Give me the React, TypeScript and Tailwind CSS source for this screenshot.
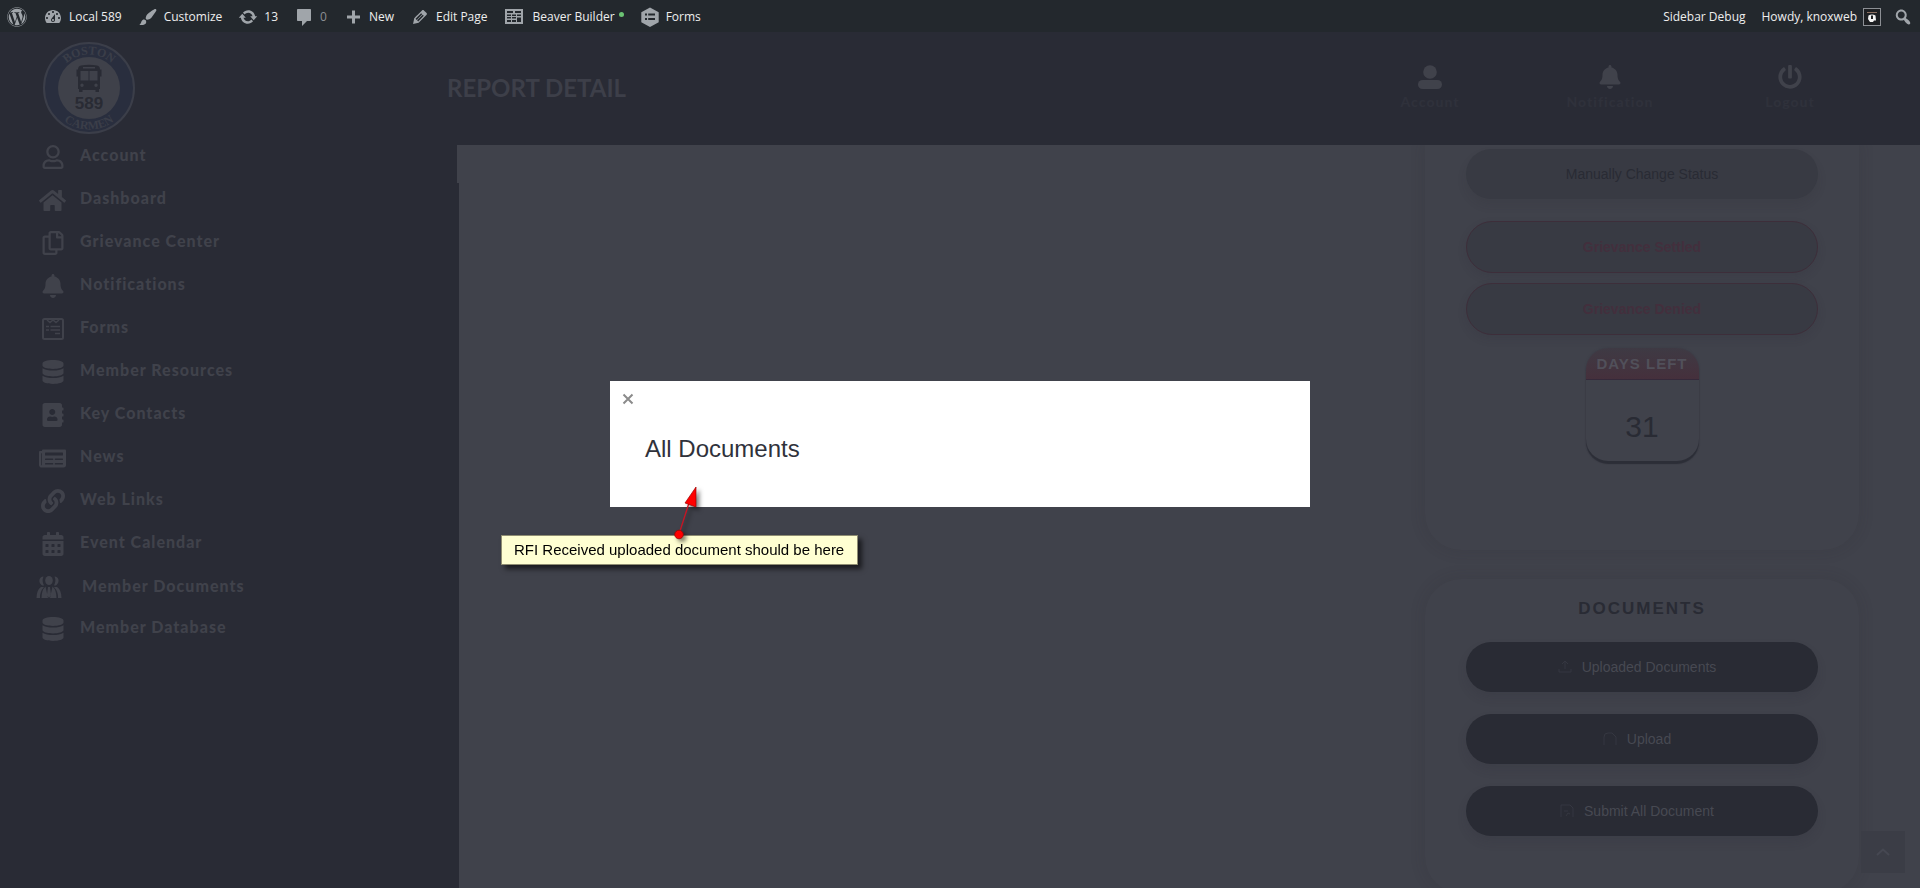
import type { ReactNode } from "react";
import {
  FaAddressBook,
  FaBell,
  FaCalendarAlt,
  FaDatabase,
  FaHome,
  FaLink,
  FaNewspaper,
  FaPowerOff,
  FaRegCopy,
  FaRegUser,
  FaWordpress,
} from "react-icons/fa";

const DASH = {
  dashboard:
    "M3.76 16h12.48c1.1-1.37 1.76-3.11 1.76-5 0-4.42-3.58-8-8-8s-8 3.58-8 8c0 1.89.66 3.63 1.76 5zM10 4c.55 0 1 .45 1 1s-.45 1-1 1-1-.45-1-1 .45-1 1-1zM6 6c.55 0 1 .45 1 1s-.45 1-1 1-1-.45-1-1 .45-1 1-1zm8 0c.55 0 1 .45 1 1s-.45 1-1 1-1-.45-1-1 .45-1 1-1zm-5.37 5.55L12 7v6c0 1.1-.9 2-2 2s-2-.9-2-2c0-.57.24-1.08.63-1.45zM4 10c.55 0 1 .45 1 1s-.45 1-1 1-1-.45-1-1 .45-1 1-1zm12 0c.55 0 1 .45 1 1s-.45 1-1 1-1-.45-1-1 .45-1 1-1zm-5 3c0-.55-.45-1-1-1s-1 .45-1 1 .45 1 1 1 1-.45 1-1z",
  brush:
    "M18.33 3.57s.27-.8-.31-1.36c-.53-.52-1.22-.24-1.22-.24-.61.3-5.76 3.47-7.67 5.57-.86.96-2.06 3.79-1.09 4.82.92.98 3.96-.17 4.79-1 2.06-2.06 5.21-7.17 5.5-7.79zM1.4 17.65c2.37-1.56 1.46-3.41 3.23-4.64.93-.65 2.22-.62 3.08.29.63.67.8 2.57-.16 3.46-1.57 1.45-4 1.55-6.15.89z",
  update:
    "M10.2 3.28c3.53 0 6.43 2.61 6.92 6h2.08l-3.5 4-3.5-4h2.32c-.45-1.97-2.21-3.45-4.32-3.45-1.45 0-2.73.71-3.54 1.78L4.95 5.66C6.23 4.2 8.11 3.28 10.2 3.28zm-.4 13.44c-3.52 0-6.43-2.61-6.92-6H.8l3.5-4c1.17 1.33 2.33 2.67 3.5 4H5.48c.45 1.97 2.21 3.45 4.32 3.45 1.45 0 2.73-.71 3.54-1.78l1.71 1.95c-1.28 1.46-3.15 2.38-5.25 2.38z",
  comment:
    "M4 2h12c.6 0 1 .4 1 1v10c0 .6-.4 1-1 1h-3l-5 5v-5H4c-.6 0-1-.4-1-1V3c0-.6.4-1 1-1z",
  plus: "M17 8.500v3h-5v5H9v-5H4v-3h5v-5h3v5z",
  edit: "M13.89 3.39l2.71 2.72c.46.46.42 1.24.03 1.64l-8.01 8.02-5.56 1.16 1.16-5.58s7.6-7.63 7.99-8.03c.39-.39 1.22-.39 1.68.07zm-2.73 2.79l-5.59 5.61 1.11 1.11 5.54-5.65zm-2.97 8.23l5.58-5.6-1.07-1.08-5.59 5.6z",
  table: "M1 2h18v15H1zM3 4v2h6V4zm8 0v2h6V4zM3 7.500v1.500h4V7.500zm5 0v1.500h4V7.500zm5 0v1.500h4V7.500zM3 10v1.500h4V10zm5 0v1.500h4V10zM3 13v2h4v-2zm5 0v2h4v-2zm5-2.500v4.500h4v-4.500z",
  forms:
    "M10 .5l8.700 4.800v9.900L10 20l-8.700-4.800V5.300zM5 6.500v2h2v-2zm3.200 0v2H15v-2zM5 11v2h2v-2zm3.200 0v2H15v-2z",
  search:
    "M12.140 4.180c1.870 1.870 2.110 4.750.72 6.890.12.1.22.21.36.31.2.16.47.36.81.59.34.24.56.39.66.47.42.31.73.57.94.78.32.32.6.65.84 1 .25.35.44.69.59 1.040.14.35.21.68.18 1-.02.32-.14.59-.36.81s-.49.34-.81.36c-.31.02-.65-.04-.99-.19-.35-.14-.7-.34-1.040-.59-.35-.24-.68-.52-1-.84-.21-.21-.47-.52-.77-.93-.1-.13-.25-.35-.47-.66-.22-.32-.4-.57-.56-.78-.16-.2-.29-.35-.44-.5-2.070 1.090-4.690.76-6.440-.98-2.140-2.150-2.140-5.640 0-7.780 2.150-2.150 5.630-2.150 7.780 0zm-1.410 6.360c1.360-1.370 1.360-3.580 0-4.950-1.370-1.370-3.590-1.370-4.950 0-1.370 1.370-1.370 3.580 0 4.950 1.360 1.370 3.580 1.370 4.950 0z",
};

function Dash({ d }: { d: string }) {
  return (
    <svg viewBox="0 0 20 20" className="size-5 shrink-0 fill-[#a0a5aa]" fillRule="evenodd" aria-hidden="true">
      <path d={d} />
    </svg>
  );
}

function BarLink({ d, children }: { d: string; children: ReactNode }) {
  return (
    <a href="#" className="flex items-center gap-[6px] whitespace-nowrap">
      <Dash d={d} />
      <span>{children}</span>
    </a>
  );
}

function AdminBar() {
  return (
    <nav
      aria-label="Toolbar"
      className="relative z-30 flex h-8 shrink-0 items-center bg-[#23282d] px-[7px] pt-px font-['Open_Sans',sans-serif] text-[12px] text-[#eeeeee]"
    >
      <div className="flex items-center gap-4">
        <a href="#" aria-label="About WordPress">
          <FaWordpress className="size-5 text-[#a0a5aa]" />
        </a>
        <BarLink d={DASH.dashboard}>Local 589</BarLink>
        <BarLink d={DASH.brush}>Customize</BarLink>
        <BarLink d={DASH.update}>13</BarLink>
        <BarLink d={DASH.comment}>
          <span className="text-[#8b8f93]">0</span>
        </BarLink>
        <BarLink d={DASH.plus}>New</BarLink>
        <BarLink d={DASH.edit}>Edit Page</BarLink>
        <a href="#" className="flex items-center gap-[9px] whitespace-nowrap">
          <Dash d={DASH.table} />
          <span className="flex items-center gap-1">
            Beaver Builder <span className="mb-1 size-[5px] rounded-full bg-[#6bc373]" />
          </span>
        </a>
        <BarLink d={DASH.forms}>Forms</BarLink>
      </div>
      <div className="ml-auto flex items-center gap-4 whitespace-nowrap">
        <a href="#">Sidebar Debug</a>
        <a href="#" className="flex items-center gap-[6px]">
          Howdy, knoxweb
          <svg viewBox="0 0 18 18" className="size-[18px]" aria-hidden="true">
            <rect x=".5" y=".5" width="17" height="17" fill="#1d1f22" stroke="#8c8f94" />
            <path d="M4 4.500h10" stroke="#8b6f60" />
            <path d="M5.500 7.500q3.500-2 7 0l.5 5h-2l-1 1.500H7L5 11z" fill="#f4f4f4" />
            <path d="M9 7.500v3.500" stroke="#222" strokeWidth="2" />
          </svg>
        </a>
        <button type="button" aria-label="Search" className="-ml-1">
          <Dash d={DASH.search} />
        </button>
      </div>
    </nav>
  );
}

function Logo() {
  return (
    <svg viewBox="0 0 92 92" className="size-[92px]" role="img" aria-label="Boston Carmen 589">
      <defs>
        <path id="arc-top" d="M12.500 46a33.500 33.500 0 0 1 67 0" />
        <path id="arc-bottom" d="M4.500 46a41.500 41.500 0 0 0 83 0" />
      </defs>
      <circle cx="46" cy="46" r="45" fill="#292e3e" stroke="#3b3e49" strokeWidth="2" />
      <circle cx="46" cy="46" r="31" fill="#3f414a" />
      <g fill="#3b3e49" fontFamily="Liberation Serif, serif" fontWeight="bold" fontSize="12">
        <text textAnchor="middle">
          <textPath href="#arc-top" startOffset="50%">BOSTON</textPath>
        </text>
        <text textAnchor="middle">
          <textPath href="#arc-bottom" startOffset="50%">CARMEN</textPath>
        </text>
      </g>
      <path
        fill="#292b34"
        fillRule="evenodd"
        d="M38 23.500q8-1.500 16 0 3 .7 3 4h1.500v7H57V47h-1v3h-3.500v-2h-13v2H36v-3h-1V34.500h-1.500v-7H35q0-3.300 3-4zM40 25v1.500h12V25zm-2.500 4v9.500h8V29zm9 0v9.500h8V29zM39 41.500a1.700 1.700 0 1 0 .01 3.400 1.700 1.700 0 0 0 0-3.400zm14 0a1.700 1.700 0 1 0 .01 3.400 1.700 1.700 0 0 0 0-3.400z"
      />
      <text x="46" y="67" textAnchor="middle" fill="#292b34" fontFamily="Liberation Sans, sans-serif" fontWeight="bold" fontSize="17">
        589
      </text>
    </svg>
  );
}

function FormIcon() {
  return (
    <svg viewBox="0 0 22 22" className="size-[22px]" fill="none" stroke="currentColor" aria-hidden="true">
      <rect x="1" y="1" width="20" height="20" rx="1.500" strokeWidth="2" />
      <path d="M5 2l3 2.500L11 2l3 2.500L17 2M4 8.500h3m1.500 0H18M4 12h3m1.500 0H18M13 15.500h5" strokeWidth="1.500" />
    </svg>
  );
}

function MembersIcon() {
  return (
    <svg viewBox="0 0 26 22" className="h-[22px] w-[26px]" fill="currentColor" aria-hidden="true">
      <ellipse cx="13" cy="4.500" rx="3.800" ry="4.500" />
      <path d="M7.500.5C3 .5 2 6 5.500 9q1 .8 2.500.5Q5.500 5 7.500.5zM18.500.5C23 .5 24 6 20.500 9q-1 .8-2.500.5Q20.500 5 18.500.5z" />
      <path d="M5 11h3Q3.500 16 4 22H.5Q.5 14 5 11zM21 11h-3q4.500 5 4 11h3.500Q25.500 14 21 11z" />
      <path d="M9.500 10.500L12 22H5.500q0-8 4-11.500zM16.500 10.500L14 22h6.500q0-8-4-11.500zM12 11h2l1 8-2 3-2-3z" />
    </svg>
  );
}

const MENU: { label: string; icon: ReactNode; wide?: boolean }[] = [
  { label: "Account", icon: <FaRegUser className="size-6" /> },
  { label: "Dashboard", icon: <FaHome className="size-[27px]" /> },
  { label: "Grievance Center", icon: <FaRegCopy className="size-6" /> },
  { label: "Notifications", icon: <FaBell className="size-6" /> },
  { label: "Forms", icon: <FormIcon /> },
  { label: "Member Resources", icon: <FaDatabase className="size-6" /> },
  { label: "Key Contacts", icon: <FaAddressBook className="size-6" /> },
  { label: "News", icon: <FaNewspaper className="size-[27px]" /> },
  { label: "Web Links", icon: <FaLink className="size-6" /> },
  { label: "Event Calendar", icon: <FaCalendarAlt className="size-6" /> },
  { label: "Member Documents", icon: <MembersIcon />, wide: true },
  { label: "Member Database", icon: <FaDatabase className="size-6" /> },
];

function Sidebar() {
  return (
    <nav aria-label="Main" className="w-[459px] shrink-0 font-['Lato',sans-serif]">
      <ul>
        {MENU.map((m) => (
          <li key={m.label} className={m.wide ? "h-[42px]" : "h-[43px]"}>
            <a
              href="#"
              className={
                m.wide
                  ? "flex items-start gap-5 pl-[35px] text-[16px] leading-[22px] font-black tracking-[1px] text-[#40424b]"
                  : "flex items-start gap-[14px] pl-[39px] text-[16px] leading-[20px] font-black tracking-[1px] text-[#40424b]"
              }
            >
              <span className="flex h-6 w-[27px] shrink-0 items-center justify-center">{m.icon}</span>
              {m.label}
            </a>
          </li>
        ))}
      </ul>
    </nav>
  );
}

function UserIcon() {
  return (
    <svg viewBox="0 0 24 24" className="size-6" fill="currentColor" aria-hidden="true">
      <circle cx="12" cy="7" r="6.800" />
      <rect y="15" width="24" height="9" rx="4.500" />
    </svg>
  );
}

function HeaderLink({ icon, label }: { icon: ReactNode; label: string }) {
  return (
    <a href="#" className="flex w-[180px] flex-col items-center gap-1 text-[#40424b]">
      {icon}
      <span className="text-[14px] leading-[18px] font-black tracking-[1px] text-[#2f313b]">{label}</span>
    </a>
  );
}

function Header() {
  return (
    <header className="flex h-[113px] shrink-0 items-center pr-10 pb-[2px] pl-[43px] font-['Lato',sans-serif]">
      <a href="#" className="w-[404px]">
        <Logo />
      </a>
      <h1 className="text-[24px] font-bold text-[#3d3f49]">REPORT DETAIL</h1>
      <nav aria-label="User" className="ml-auto flex">
        <HeaderLink icon={<UserIcon />} label="Account" />
        <HeaderLink icon={<FaBell className="size-6" />} label="Notification" />
        <HeaderLink icon={<FaPowerOff className="size-6" />} label="Logout" />
      </nav>
    </header>
  );
}

function DocButton({ path, children }: { path: string; children: ReactNode }) {
  return (
    <button
      type="button"
      className="flex h-[50px] items-center justify-center gap-[10px] rounded-full bg-[#292b34] pr-[10px] text-[14px] text-[#474952] shadow-[0_6px_10px_rgba(41,43,53,0.15)]"
    >
      <svg viewBox="0 0 14 14" className="size-[14px] text-[#353741]" fill="none" stroke="currentColor" aria-hidden="true">
        <path d={path} />
      </svg>
      {children}
    </button>
  );
}

function RightColumn() {
  return (
    <aside className="flex w-[434px] shrink-0 flex-col gap-[29px]">
      <section className="flex h-[405px] shrink-0 flex-col items-stretch rounded-b-[36px] bg-[#40424b] px-[41px] pt-1 shadow-[0_0_14px_2px_rgba(41,43,53,0.14)]">
        <button
          type="button"
          className="h-[50px] rounded-full bg-[#383a43] text-[14px] text-[#292b34] shadow-[0_6px_10px_rgba(41,43,53,0.12)]"
        >
          Manually Change Status
        </button>
        <button
          type="button"
          className="mt-[22px] h-[52px] rounded-full border border-[#3d2e3a] bg-[#383a43] text-[14px] font-bold text-[#432f3d] shadow-[0_4px_8px_rgba(41,43,53,0.15)]"
        >
          Grievance Settled
        </button>
        <button
          type="button"
          className="mt-[10px] h-[52px] rounded-full border border-[#3d2e3a] bg-[#383a43] text-[14px] font-bold text-[#432f3d] shadow-[0_4px_8px_rgba(41,43,53,0.15)]"
        >
          Grievance Denied
        </button>
        <div className="mt-[13px] flex h-[113px] w-[113px] flex-col self-center overflow-hidden rounded-[22px] bg-[#40424b] text-center shadow-[0_3px_1px_#2c2e37,0_0_2px_#373943]">
          <div className="h-8 border-b border-[#35293a] bg-linear-to-b from-[#3e3a44] to-[#45303c] text-[15px] leading-[32px] font-bold tracking-[1px] text-[#51505a]">
            DAYS LEFT
          </div>
          <div className="pt-7 text-[30px] leading-[38px] text-[#292b34]">31</div>
        </div>
      </section>
      <section className="flex h-[314px] shrink-0 flex-col items-stretch gap-[22px] rounded-[36px] bg-[#40424b] px-[41px] pt-[19px] shadow-[0_0_14px_2px_rgba(41,43,53,0.14)]">
        <h2 className="text-center text-[17px] leading-[22px] font-bold tracking-[2px] text-[#292b34]">DOCUMENTS</h2>
        <DocButton path="M7 9V1M4 4l3-3 3 3M1 9v3h12V9">Uploaded Documents</DocButton>
        <DocButton path="M1 13V5q0-4 4-4h4l4 4v8">Upload</DocButton>
        <DocButton path="M1 13V1h9l3 3v9M4 7h4M6 12l2-3 2 1">Submit All Document</DocButton>
      </section>
    </aside>
  );
}

function Annotation() {
  return (
    <div className="absolute top-[154px] -left-[109px] z-30 w-[357px]">
      <p className="border border-[#8f8d72] bg-[#ffffd2] pl-3 text-[15px] leading-[28px] whitespace-nowrap text-black shadow-[4px_4px_5px_rgba(0,0,0,0.6)]">
        RFI Received uploaded document should be here
      </p>
      <svg
        viewBox="0 0 40 60"
        className="absolute -top-[52px] left-[164px] h-[60px] w-10 drop-shadow-[3px_3px_2px_rgba(0,0,0,0.5)]"
        aria-hidden="true"
      >
        <path d="M14 51L24 20" stroke="#c81423" strokeWidth="1.300" />
        <path d="M31 4L20 20l11 4z" fill="#ff0000" stroke="#9c0000" strokeWidth=".7" />
        <circle cx="14" cy="51.500" r="4.300" fill="#ff0000" stroke="#9c0000" strokeWidth=".8" />
      </svg>
    </div>
  );
}

function DocumentsDialog() {
  return (
    <div className="fixed inset-0 z-20 flex items-center justify-center">
      <div role="dialog" aria-labelledby="dialog-title" className="relative w-[700px] bg-white">
        <div className="flex h-[35px] items-center pl-3">
          <button type="button" aria-label="Close" className="text-[#8b8b8b]">
            <svg viewBox="0 0 12 12" className="size-3" stroke="currentColor" strokeWidth="2" aria-hidden="true">
              <path d="M1.500 1.500l9 9M10.500 1.500l-9 9" />
            </svg>
          </button>
        </div>
        <h2 id="dialog-title" className="px-[35px] pt-[17px] pb-[42px] text-[24px] leading-[32px] text-[#30323b]">
          All Documents
        </h2>
        <Annotation />
      </div>
    </div>
  );
}

export default function App() {
  return (
    <div className="flex h-screen flex-col overflow-hidden bg-[#292b35] font-['Liberation_Sans',Arial,sans-serif]">
      <AdminBar />
      <Header />
      <div className="flex min-h-0 flex-1">
        <Sidebar />
        <main className="relative min-w-0 flex-1 bg-[#40424b]">
          <span className="absolute top-0 -left-[2px] h-[38px] w-[2px] bg-[#40424b]" />
          <div className="flex h-full justify-end overflow-hidden pr-[61px]">
            <RightColumn />
          </div>
          <button
            type="button"
            aria-label="Back to top"
            className="absolute right-[15px] bottom-[15px] flex h-[42px] w-11 items-center justify-center bg-[#3b3d46]"
          >
            <svg viewBox="0 0 14 8" className="h-2 w-[14px]" fill="none" stroke="#464852" strokeWidth="2" aria-hidden="true">
              <path d="M1 7l6-5.500L13 7" />
            </svg>
          </button>
        </main>
      </div>
      <DocumentsDialog />
    </div>
  );
}
